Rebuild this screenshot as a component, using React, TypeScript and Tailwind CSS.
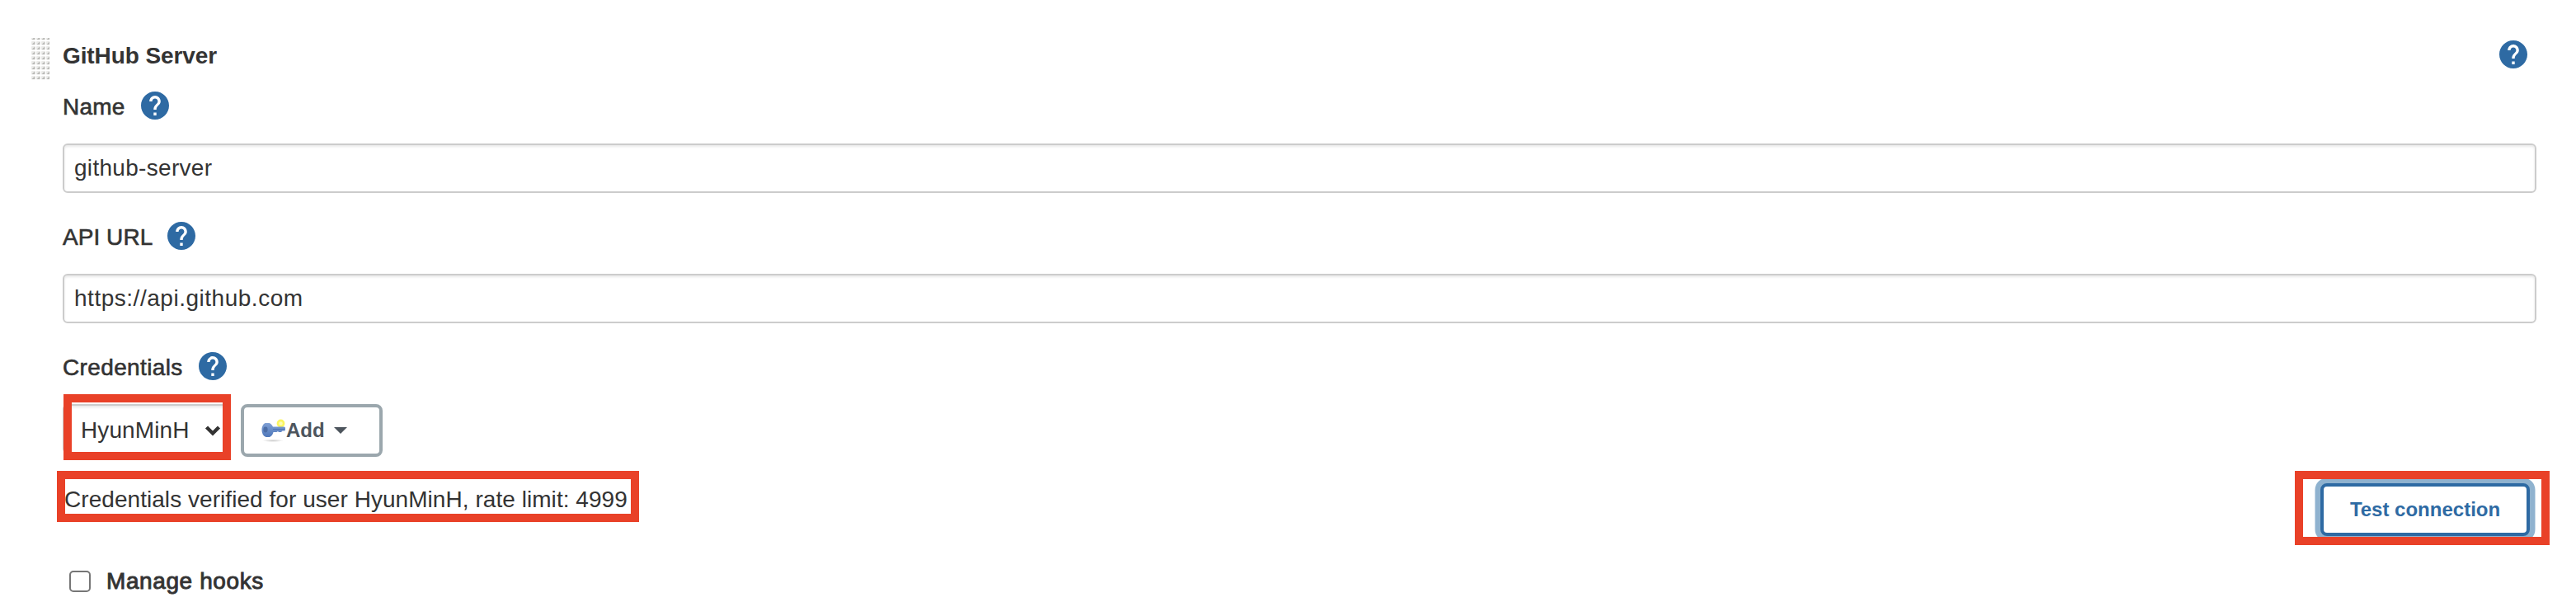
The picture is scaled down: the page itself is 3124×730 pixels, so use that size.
import React from "react";

function HelpIcon() {
  return (
    <svg viewBox="2 2 20 20" className="block size-[34px] shrink-0 fill-[#2e6aa3]" aria-hidden="true">
      <path d="M12 2C6.48 2 2 6.48 2 12s4.48 10 10 10 10-4.48 10-10S17.52 2 12 2zm1 17h-2v-2h2v2zm2.07-7.75-.9.92C13.45 12.9 13 13.5 13 15h-2v-.5c0-1.1.45-2.1 1.17-2.83l1.24-1.26c.37-.36.59-.86.59-1.41 0-1.1-.9-2-2-2s-2 .9-2 2H8c0-2.21 1.79-4 4-4s4 1.79 4 4c0 .88-.36 1.68-.93 2.25z" />
    </svg>
  );
}

function DragHandle() {
  const dots: React.ReactNode[] = [];
  for (let row = 0; row < 9; row++) {
    for (let col = 0; col < 4; col++) {
      const x = col * 6;
      const y = row * 6;
      dots.push(
        <g key={`${row}-${col}`}>
          <rect x={x} y={y} width="5" height="4.6" rx="1" fill="#ebebe9" />
          <path d={`M${x + 4.2} ${y + 0.4}v3.6h-3.6z`} fill="#b8b8b5" />
        </g>
      );
    }
  }
  return (
    <svg viewBox="0 2 22 52" className="block h-[52px] w-[22px] shrink-0" aria-hidden="true">
      {dots}
    </svg>
  );
}

function KeyIcon() {
  return (
    <svg viewBox="0 0 30 30" className="block size-[30px] shrink-0" aria-hidden="true">
      <defs>
        <radialGradient id="shade">
          <stop offset="0" stopColor="#cccccc" />
          <stop offset="1" stopColor="#ffffff" />
        </radialGradient>
        <linearGradient id="key" x1="0" y1="0" x2="0" y2="1">
          <stop offset="0" stopColor="#7f9fd4" />
          <stop offset="1" stopColor="#4f78ba" />
        </linearGradient>
      </defs>
      <ellipse cx="14" cy="27.3" rx="13" ry="1.8" fill="url(#shade)" />
      <circle cx="23.500" cy="6.500" r="3.600" fill="#fdfcb4" stroke="#fbf55f" strokeWidth="2.600" />
      <path
        d="M4.500 6h5q2.500.5 4.500 4.500h13.500q1.500 0 1.500 1.500v2q0 1.500-1.500 1.500h-2l-1.500 1.500h-3l-1-1-1.500 1h-4q-1 4.500-4.500 6h-4.500q-5-2-5-8.500t4-8.500z"
        fill="url(#key)"
      />
      <ellipse cx="5" cy="14" rx="2.600" ry="3.400" fill="#4c6da6" />
      <path d="M14 13.500h14" stroke="#4f75b4" strokeWidth="1" />
    </svg>
  );
}

function Label({ text, className }: { text: string; className: string }) {
  return (
    <div className="flex h-11 items-center">
      <label className={`leading-[44px] whitespace-nowrap [-webkit-text-stroke:0.6px_#333] ${className}`}>{text}</label>
      <div className="-mt-1">
        <HelpIcon />
      </div>
    </div>
  );
}

function TextField({ value, className }: { value: string; className: string }) {
  return (
    <div className="mt-[22px] flex h-[60px] items-center rounded-[6px] border-2 border-[#ccc] bg-white pl-3 shadow-[inset_0_2px_3px_rgba(0,0,0,0.09)]">
      <span className={className}>{value}</span>
    </div>
  );
}

export default function App() {
  return (
    <div className="relative h-[730px] w-[3124px] overflow-hidden bg-white pt-[46px] font-['Liberation_Sans',Arial,sans-serif] text-[28px] leading-10 text-[#333]">
      <div className="flex h-[62px] items-start pl-[38px] pr-[59px]">
        <DragHandle />
        <h2 className="ml-4 mt-0.5 font-bold tracking-[-0.1px]">GitHub Server</h2>
        <div className="ml-auto mt-[3px]">
          <HelpIcon />
        </div>
      </div>

      <main className="ml-[76px] w-[3000px]">
        <Label text="Name" className="w-[95px] tracking-[0.2px]" />
        <TextField value="github-server" className="tracking-[0.3px]" />
        <div className="h-8" />
        <Label text="API URL" className="w-[127px] tracking-[0.05px]" />
        <TextField value="https://api.github.com" className="tracking-[0.520px]" />
        <div className="h-8" />
        <Label text="Credentials" className="w-[165px] tracking-[0.360px]" />

        <div className="mt-[22px] flex h-16 items-start">
          <div className="flex h-[60px] w-[202px] items-center rounded-[6px] border-2 border-[#ccc] pl-5 pt-1 shadow-[inset_0_2px_3px_rgba(0,0,0,0.09)]">
            <span className="w-[150px] tracking-[0.1px]">HyunMinH</span>
            <svg viewBox="0 0 20 14" className="h-[14px] w-5 shrink-0" aria-hidden="true">
              <path d="M2.500 3l7.500 7.500 7.500-7.500" fill="none" stroke="#333" strokeWidth="4.400" />
            </svg>
          </div>
          <div className="ml-[14px] flex h-16 w-[172px] items-center rounded-lg border-4 border-[#9ba7ad] pl-[21px] text-2xl font-bold text-[#4d555d]">
            <KeyIcon />
            <span className="w-[58px]">Add</span>
            <svg viewBox="0 0 16 8" className="h-2 w-4 fill-[#4d555d]" aria-hidden="true">
              <path d="M0 0h16L8 8z" />
            </svg>
          </div>
        </div>

        <div className="mt-8 flex h-16 items-start justify-between pl-0.5 pr-2">
          <p className="tracking-[0.050px]">Credentials verified for user HyunMinH, rate limit: 4999</p>
          <button className="h-16 w-[254px] rounded-lg border-4 border-[#2e6aa3] bg-white text-2xl font-bold text-[#2e6aa3] shadow-[0_0_0_6.500px_#8fb2cf]">
            Test connection
          </button>
        </div>

        <div className="mt-[42px] flex h-[26px] items-center pl-2">
          <span className="size-[26px] rounded-[5px] border-2 border-[#767676] bg-white" />
          <span className="ml-[19px] tracking-[0.600px] [-webkit-text-stroke:0.9px_#333]">Manage hooks</span>
        </div>
      </main>

      <div className="absolute left-[77px] top-[478px] h-20 w-[203px] border-10 border-[#e94128]" />
      <div className="absolute left-[69px] top-[571px] h-[62px] w-[706px] border-10 border-[#e94128]" />
      <div className="absolute left-[2783px] top-[571px] h-[90px] w-[309px] border-10 border-[#e94128]" />
    </div>
  );
}
